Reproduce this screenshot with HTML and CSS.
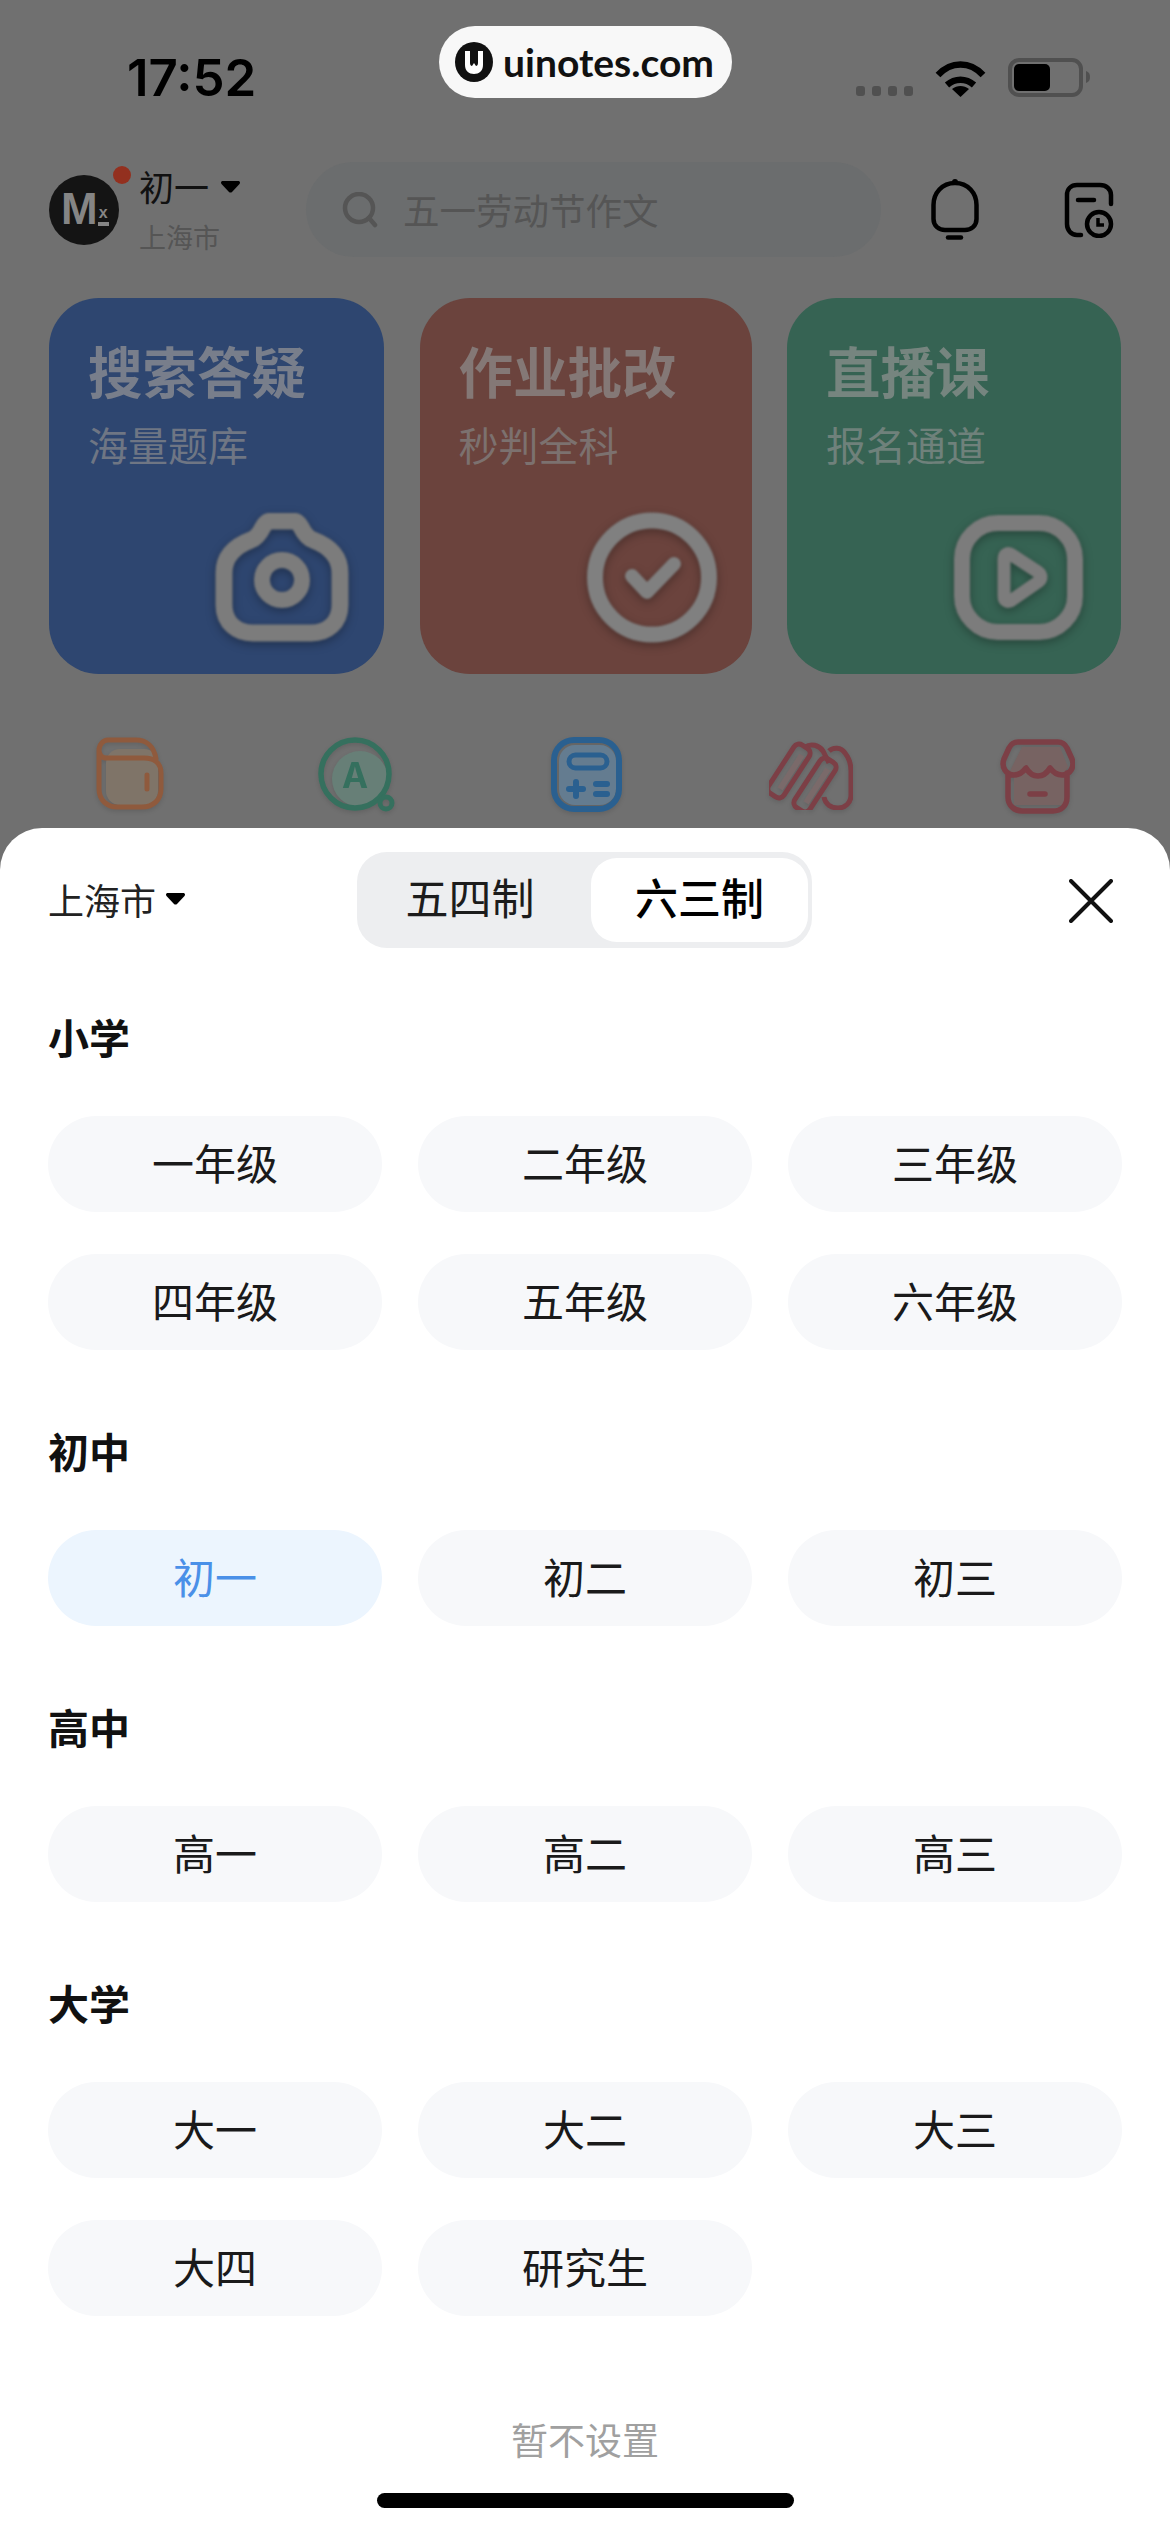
FILE: index.html
```html
<!DOCTYPE html>
<html>
<head>
	<meta charset="utf-8">
	<title>选择年级</title>
	<link rel="stylesheet" href="styles.css">
</head>
<body>
	<div class="watermark">
		<svg class="wm-logo" viewBox="0 0 38 40"><ellipse cx="19" cy="20" rx="19" ry="20" fill="#111"/><path d="M10 9h5v12c0 2 1 3 2 3l2-3 2 3c1 0 2-1 2-3V9h5v14c0 6-4 9-9 9s-9-3-9-9z" fill="#fff"/></svg>
		<span>uinotes.com</span>
	</div>

	<div class="status">
		<span class="time">17:52</span>
		<div class="status-right">
			<div class="signal"><i></i><i></i><i></i><i></i></div>
			<svg class="wifi" viewBox="0 0 51 37"><path d="M3 15C16 1 35 1 48 15M12 25c8-7 19-7 27 0" fill="none" stroke="#000" stroke-width="6.5"/><path d="M25.500 37 17 29c5-4 12-4 17 0z"/></svg>
			<svg class="battery" viewBox="0 0 83 39"><rect x="2" y="2" width="71" height="35" rx="9" fill="none" stroke="#505050" stroke-width="4"/><rect x="6" y="6" width="36" height="27" rx="5"/><path d="M78 13c3 1 4 3 4 6s-1 5-4 6z" fill="#505050"/></svg>
		</div>
	</div>

	<div class="header">
		<div class="user">
			<div class="avatar"><b>M</b><em>x</em><i class="dot"></i></div>
			<div class="user-text">
				<div class="grade">初一<svg class="caret" viewBox="0 0 19 12"><path d="M2 0h15c2 0 2.500 1.500 1.500 3L11 11c-.8.800-2.200.800-3 0L.5 3C-.5 1.500 0 0 2 0z"/></svg></div>
				<div class="city">上海市</div>
			</div>
		</div>
		<div class="search">
			<svg class="search-ico" viewBox="0 0 36 36"><circle cx="17" cy="16" r="14" fill="none" stroke="#555" stroke-width="4.500"/><path d="M27 26l6 7" stroke="#555" stroke-width="4.500" stroke-linecap="round"/></svg>
			<span>五一劳动节作文</span>
		</div>
		<svg class="bell" viewBox="0 0 48 62"><path d="M24 4C11 4 2.500 14 2.500 26v14c0 7 5.500 11 11.500 11h20c6 0 11.500-4 11.500-11V26C45.500 14 37 4 24 4z" fill="none" stroke="#000" stroke-width="4.500"/><circle cx="24" cy="3" r="3"/><path d="M17 58.500h13" stroke="#000" stroke-width="4.500" stroke-linecap="round"/></svg>
		<svg class="cal" viewBox="0 0 50 56"><path d="M17 53h-4C7 53 3 48 3 42V13C3 7 7 3 13 3h23c6 0 11 4 11 10v9" fill="none" stroke="#000" stroke-width="4.500" stroke-linecap="round"/><path d="M14 18h16" stroke="#000" stroke-width="4.500" stroke-linecap="round"/><circle cx="35" cy="42" r="12" fill="none" stroke="#000" stroke-width="4.500"/><path d="M34 36v7h6" fill="none" stroke="#000" stroke-width="3.500"/></svg>
	</div>

	<div class="cards">
		<div class="card blue">
			<div class="card-title">搜索答疑</div>
			<div class="card-sub">海量题库</div>
			<svg class="card-ico cam" viewBox="0 0 134 129"><path d="M36 27c6-2 9-7 12-13 2-4 5-6 9-6h20c4 0 7 2 9 6 3 6 6 11 12 13 16 6 27 16 27 33v32c0 18-13 28-29 28H38C22 120 9 110 9 92V60c0-17 11-27 27-33z" fill="none" stroke="#7c7c7c" stroke-width="17"/><circle cx="67" cy="67" r="20" fill="none" stroke="#7c7c7c" stroke-width="16"/></svg>
		</div>
		<div class="card red">
			<div class="card-title">作业批改</div>
			<div class="card-sub">秒判全科</div>
			<svg class="card-ico chk" viewBox="0 0 130 131"><circle cx="65" cy="65.500" r="57" fill="none" stroke="#808080" stroke-width="16"/><path d="M45 64l15 16 27-28" fill="none" stroke="#808080" stroke-width="14" stroke-linecap="round" stroke-linejoin="round"/></svg>
		</div>
		<div class="card green">
			<div class="card-title">直播课</div>
			<div class="card-sub">报名通道</div>
			<svg class="card-ico ply" viewBox="0 0 129 125"><rect x="8" y="8" width="113" height="109" rx="36" fill="none" stroke="#7c7c7c" stroke-width="16"/><path d="M50 44c0-5 4-7 8-4l26 17c4 3 4 7 0 10L58 85c-4 3-8 1-8-4z" fill="none" stroke="#7c7c7c" stroke-width="13" stroke-linejoin="round"/></svg>
		</div>
	</div>

	<div class="tools">
		<svg class="tool t-wallet" viewBox="0 0 68 73"><rect x="10" y="12" width="52" height="56" rx="14" fill="#7f7468"/><path d="M3 13v39c0 11 8 18 18 18h25c11 0 19-7 19-18V36c0-10-7-15-17-15H11c-5 0-8-3-8-8s4-10 9-10h28c10 0 18 6 20 19M51 38v14" fill="none" stroke="#8f5a3d" stroke-width="5" stroke-linecap="round"/></svg>
		<svg class="tool t-search" viewBox="0 0 78 76"><circle cx="42" cy="42" r="28" fill="#677f77"/><circle cx="37" cy="37" r="34" fill="none" stroke="#35705e" stroke-width="5.500"/><circle cx="68" cy="66" r="6" fill="none" stroke="#35705e" stroke-width="5"/><text x="37" y="51" text-anchor="middle" class="t-letter">A</text></svg>
		<svg class="tool t-calc" viewBox="0 0 71 75"><rect x="8" y="8" width="57" height="60" rx="16" fill="#647c90"/><rect x="3" y="3" width="65" height="69" rx="20" fill="none" stroke="#2a6090" stroke-width="6"/><rect x="18" y="18" width="38" height="13" rx="6.500" fill="none" stroke="#2a6090" stroke-width="5"/><path d="M18 52h14M25 45v14M45 47h11M45 57h11" stroke="#2a6090" stroke-width="6" stroke-linecap="round"/></svg>
		<svg class="tool t-sticks" viewBox="0 0 84 69"><g fill="none" stroke="#7c3f46" stroke-width="5"><path d="M60 10c4-4 12-4 16 2 4 5 6 10 6 18v24c0 8-6 13-13 13s-13-4-14-11M36 6c6-4 14-2 18 4l6 12"/><rect x="-9" y="-29" width="18" height="58" rx="6" transform="translate(20 30) rotate(33)"/><rect x="-9" y="-29" width="18" height="58" rx="6" transform="translate(46 44) rotate(33)"/></g><rect x="-3" y="-20" width="6" height="40" fill="#7a6a6a" transform="translate(22 31) rotate(33)"/><rect x="-3" y="-20" width="6" height="40" fill="#7a6a6a" transform="translate(48 45) rotate(33)"/></svg>
		<svg class="tool t-store" viewBox="0 0 75 75"><path d="M22 8h38l8 20-4 6v32H14V36l-4-4z" fill="#776362"/><g fill="none" stroke="#7c3f46" stroke-width="5.500" stroke-linecap="round" stroke-linejoin="round"><path d="M18 3h40c4 0 7 2 9 6l5 11c3 8-2 16-10 16-6 0-9-3-12-7-3 5-7 8-12 8s-9-3-12-8c-3 4-6 7-12 7-8 0-13-8-10-16L9 9c2-4 5-6 9-6zM8 34v24c0 9 7 14 14 14h31c8 0 14-5 14-14V34M30 55h15"/></g></svg>
	</div>

	<div class="sheet">
		<div class="sheet-top">
			<div class="sheet-city">上海市<svg class="caret" viewBox="0 0 19 12"><path d="M2 0h15c2 0 2.500 1.500 1.500 3L11 11c-.8.800-2.200.800-3 0L.5 3C-.5 1.500 0 0 2 0z"/></svg></div>
			<div class="seg">
				<div class="seg-item">五四制</div>
				<div class="seg-item on">六三制</div>
			</div>
			<svg class="close" viewBox="0 0 44 44"><path d="M2 2l40 40M42 2L2 42" stroke="#111" stroke-width="4" stroke-linecap="round"/></svg>
		</div>

		<h3 class="first">小学</h3>
		<div class="grades">
			<div class="pill">一年级</div><div class="pill">二年级</div><div class="pill">三年级</div>
			<div class="pill">四年级</div><div class="pill">五年级</div><div class="pill">六年级</div>
		</div>

		<h3>初中</h3>
		<div class="grades">
			<div class="pill active">初一</div><div class="pill">初二</div><div class="pill">初三</div>
		</div>

		<h3>高中</h3>
		<div class="grades">
			<div class="pill">高一</div><div class="pill">高二</div><div class="pill">高三</div>
		</div>

		<h3>大学</h3>
		<div class="grades">
			<div class="pill">大一</div><div class="pill">大二</div><div class="pill">大三</div>
			<div class="pill">大四</div><div class="pill">研究生</div>
		</div>

		<div class="skip">暂不设置</div>
		<div class="homebar"></div>
	</div>
</body>
</html>
```

FILE: styles.css
```css
*{margin: 0; padding: 0; box-sizing: border-box;}
html,body{height: 2532px; overflow: hidden;}
body{position: relative; padding-top: 58px; background: #707070; color: #111; font-family: "Noto Sans CJK SC", "Noto Sans", sans-serif;}
svg{display: block; flex: none;}

/* watermark */
.watermark{position: absolute; left: 439px; top: 26px; width: 293px; height: 72px; border-radius: 36px; background: #f8f8f8; display: flex; align-items: center; padding-left: 16px; gap: 10px; font: 700 39px "Lato", sans-serif; color: #111;}
.wm-logo{width: 38px; height: 40px;}

/* status bar */
.status{height: 39px; padding: 0 79px 0 127px; display: flex; justify-content: space-between; align-items: center;}
.time{font: 600 51px/39px "Inter", sans-serif; color: #000;}
.status-right{display: flex; align-items: flex-end; height: 39px;}
.signal{display: flex; gap: 7px; margin: 0 22px 1px 0;}
.signal i{width: 9px; height: 10px; border-radius: 3px; background: #505050;}
.wifi{width: 51px; height: 37px; margin-right: 22px;}
.battery{width: 83px; height: 39px;}

/* header */
.header{height: 95px; margin-top: 65px; padding-left: 49px; display: flex; align-items: center;}
.user{width: 257px; display: flex; align-items: center; gap: 20px;}
.avatar{position: relative; width: 70px; height: 70px; padding: 12px 0 16px 12px; border-radius: 50%; background: #141414; color: #858585; font-family: "Liberation Sans", sans-serif; display: flex; align-items: flex-end;}
.avatar b{font-size: 44px; line-height: 40px; height: 40px;}
.avatar em{width: 11px; height: 22px; margin: 0 0 3px; border-bottom: 4px solid #858585; font-style: normal; font-weight: 700; font-size: 16px; line-height: 18px; text-align: center;}
.dot{position: absolute; left: 64px; top: -9px; width: 18px; height: 18px; border-radius: 50%; background: #93301f;}
.grade{display: flex; align-items: center; font-size: 35px; line-height: 44px; margin-top: -2px; color: #111;}
.grade .caret{margin: 3px 0 0 12px;}
.caret{width: 19px; height: 12px;}
.city{font-size: 27px; line-height: 34px; margin-top: 12px; color: #555;}
.search{width: 575px; height: 95px; border-radius: 48px; background: #6b6d6e; display: flex; align-items: center; padding-left: 36px; gap: 25px; font-size: 36.500px; color: #555;}
.search-ico{width: 36px; height: 36px;}
.bell{width: 48px; height: 62px; margin-left: 50px;}
.cal{width: 50px; height: 56px; margin-left: 85px;}

/* cards */
.cards{margin-top: 41px; padding-left: 49px; display: grid; grid-template-columns: 335px 332px 334px; column-gap: 35.500px;}
.card{height: 376px; border-radius: 50px; padding: 39px 0 0 39px; display: flex; flex-direction: column;}
.blue{background: #2e4670;}
.red{background: #6b433d;}
.green{background: #366353;}
.card-title{font-size: 54.500px; line-height: 66px; font-weight: 700;}
.card-sub{font-size: 40px; line-height: 48px; margin-top: 17px;}
.blue .card-title{color: #787e8b;}
.red .card-title{color: #847876;}
.green .card-title{color: #76857f;}
.blue .card-sub{color: #6f7684;}
.red .card-sub{color: #7c716f;}
.green .card-sub{color: #6f817b;}
.card-ico{margin-top: auto; align-self: flex-end; filter: blur(1px) drop-shadow(0 3px 5px rgba(0,0,0,.3));}
.cam{width: 134px; height: 129px; margin: auto 35px 32px 0;}
.chk{width: 130px; height: 131px; margin: auto 35px 31px 0;}
.ply{width: 129px; height: 125px; margin: auto 38px 34px 0;}

/* tool row */
.tools{height: 91px; margin-top: 63px; padding-left: 16px; display: grid; grid-template-columns: repeat(5,227px); justify-items: center; align-items: start;}
.tool{filter: blur(.5px) drop-shadow(0 2px 2px rgba(0,0,0,.12));}
.t-wallet{width: 68px; height: 73px;}
.t-search{width: 78px; height: 76px;}
.t-calc{width: 71px; height: 75px; margin-left: 5px;}
.t-sticks{width: 84px; height: 69px; margin-top: 4px;}
.t-store{width: 75px; height: 75px; margin-top: 2px;}
.t-letter{font: 700 35px "Inter", sans-serif; fill: #35705e;}

/* sheet */
.sheet{height: 1704px; border-radius: 42px 42px 0 0; background: #fff; padding: 24px 48px 0;}
.sheet-top{display: grid; grid-template-columns: 309px 455px 1fr; align-items: center; height: 96px;}
.sheet-city{display: flex; align-items: center; gap: 10px; font-size: 36px; line-height: 50px; padding: 0 0 3px 0; color: #222;}
.seg{display: flex; height: 96px; padding: 6px 4px 6px 0; border-radius: 30px; background: #edeef0; font-size: 43px; color: #1c1c1c;}
.seg-item{flex: 1; display: flex; align-items: center; justify-content: center; padding: 0 8px 8px 0;}
.seg-item.on{flex: none; width: 217px; padding: 0 0 8px; border-radius: 26px; background: #fff; font-weight: 500; color: #000;}
.close{width: 44px; height: 44px; justify-self: end; margin: 2px 9px 0 0;}

h3{font-size: 41px; line-height: 56px; font-weight: 600; color: #111; margin-top: 72px;}
h3.first{margin-top: 60px;}
.grades{margin-top: 52px; display: grid; grid-template-columns: repeat(3,334px); gap: 42px 36px;}
.pill{height: 96px; padding-bottom: 5px; border-radius: 48px; background: #f7f8fa; display: flex; align-items: center; justify-content: center; font-size: 42px; color: #1a1a1a;}
.pill.active{background: #ecf5fe; color: #4a90e8;}

.skip{margin-top: 98px; font-size: 37px; line-height: 50px; text-align: center; color: #a0a0a0;}
.homebar{width: 417px; height: 15px; margin: 29px auto 0; border-radius: 8px; background: #000;}
```
